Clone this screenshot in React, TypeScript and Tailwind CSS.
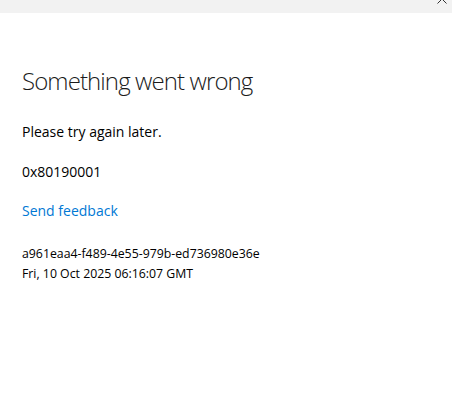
import React from "react";

export default function App() {
  return (
    <div className="w-[452px] h-[415px] bg-white relative overflow-hidden" style={{ fontFamily: '"Open Sans", "Noto Sans", sans-serif' }}>
      <div className="h-[13px] bg-[#f2f2f2] relative">
        <svg className="absolute right-[5px] top-[-6px]" width="10" height="10" viewBox="0 0 10 10">
          <path d="M0.5 0.5 L9.5 9.5 M9.5 0.5 L0.5 9.5" stroke="#333" strokeWidth="1" fill="none" />
        </svg>
      </div>
      <div className="px-[22px] text-black">
        <h1 className="mt-[50px] text-[24px] leading-[36px] font-light tracking-[-0.9px] text-[#1b1b1b]">Something went wrong</h1>
        <p className="mt-[23px] text-[14px] leading-[20px]">Please try again later.</p>
        <p className="mt-[20px] text-[14px] leading-[20px]">0x80190001</p>
        <p className="mt-[19px] text-[14px] leading-[20px] text-[#0078d4]">Send feedback</p>
        <div className="mt-[23px] text-[12.3px] leading-[20px]">
          <p>a961eaa4-f489-4e55-979b-ed736980e36e</p>
          <p>Fri, 10 Oct 2025 06:16:07 GMT</p>
        </div>
      </div>
    </div>
  );
}
